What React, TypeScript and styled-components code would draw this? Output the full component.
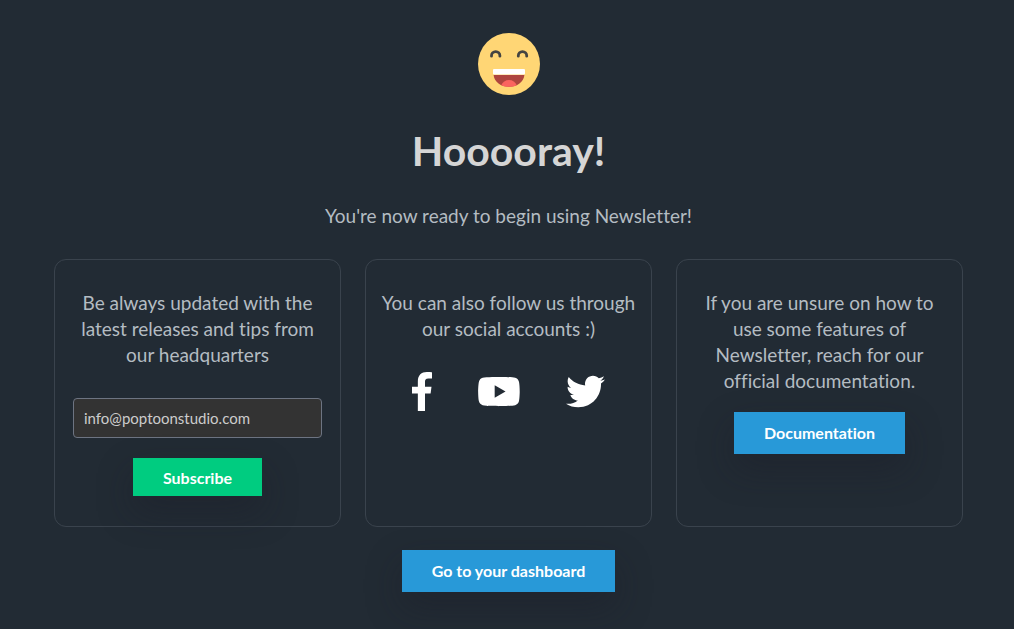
import React from "react";
import styled, { createGlobalStyle, css } from "styled-components";

const GlobalStyle = createGlobalStyle`
  *, *::before, *::after { box-sizing: border-box; }
  body {
    margin: 0;
    background: #222b34;
    color: #b4bcc2;
    font-family: Lato, "Open Sans", sans-serif;
    font-size: 19px;
    font-variant-ligatures: none;
    line-height: 26px;
  }
`;

const Page = styled.main`
  display: flex;
  flex-direction: column;
  align-items: center;
  padding: 33px 51px 37px 54px;
  text-align: center;
`;

const Title = styled.h1`
  margin: 32px 0 28px;
  color: #d5d5d5;
  font-size: 41px;
  font-weight: 700;
  line-height: 48px;
`;

const Text = styled.p`
  margin: 0;
`;

const Cards = styled.div`
  display: grid;
  grid-template-columns: repeat(3, minmax(0, 1fr));
  gap: 24px;
  width: 100%;
  margin: 30px 0 23px;
`;

const Card = styled.section`
  display: flex;
  flex-direction: column;
  align-items: center;
  padding: 30px 14px;
  border: 1px solid #3a434d;
  border-radius: 12px;
`;

const Form = styled.form`
  display: flex;
  flex-direction: column;
  align-items: center;
  gap: 20px;
  width: 100%;
  margin-top: 30px;
  padding: 0 4px;
`;

const EmailInput = styled.input`
  width: 100%;
  height: 40px;
  padding: 0 10px;
  border: 1px solid #6d7482;
  border-radius: 4px;
  background: #333;
  color: #ccc;
  font-family: inherit;
  font-size: 15px;
`;

const buttonLook = css`
  padding: 0 30px;
  border: 0;
  color: #fff;
  font-family: inherit;
  font-size: 16px;
  font-weight: 700;
  text-decoration: none;
  white-space: nowrap;
  cursor: pointer;
  box-shadow: 0 15px 35px rgba(27, 27, 38, 0.35);
`;

const SubscribeButton = styled.button`
  ${buttonLook}
  height: 38px;
  background: #00cc80;
`;

const LinkButton = styled.a<{ $gap?: number }>`
  ${buttonLook}
  margin-top: ${({ $gap = 0 }) => $gap}px;
  background: #2899d8;
  line-height: 42px;
`;

const SocialLinks = styled.nav`
  display: flex;
  gap: 45px;
  margin-top: 30px;
`;

const SocialLink = styled.a`
  display: flex;
  color: #fff;

  svg {
    height: 39px;
    fill: currentColor;
  }
`;

const socials = [
  {
    name: "Facebook",
    width: 264,
    path: "M76.7 512V283H0v-91h76.7v-71.7C76.7 42.4 124.3 0 193.8 0c33.3 0 61.9 2.5 70.2 3.6V85h-48.2c-37.8 0-45.1 18-45.1 44.3V192H256l-11.7 91h-73.6v229",
  },
  {
    name: "YouTube",
    width: 576,
    path: "M549.655 124.083c-6.281-23.65-24.787-42.276-48.284-48.597C458.781 64 288 64 288 64S117.22 64 74.629 75.486c-23.497 6.322-42.003 24.947-48.284 48.597-11.412 42.867-11.412 132.305-11.412 132.305s0 89.438 11.412 132.305c6.281 23.65 24.787 41.5 48.284 47.821C117.22 448 288 448 288 448s170.78 0 213.371-11.486c23.497-6.321 42.003-24.171 48.284-47.821 11.412-42.867 11.412-132.305 11.412-132.305s0-89.438-11.412-132.305zm-317.51 213.508V175.185l142.739 81.205-142.739 81.201z",
  },
  {
    name: "Twitter",
    width: 512,
    path: "M459.37 151.716c.325 4.548.325 9.097.325 13.645 0 138.72-105.583 298.558-298.558 298.558-59.452 0-114.68-17.219-161.137-47.106 8.447.974 16.568 1.299 25.34 1.299 49.055 0 94.213-16.568 130.274-44.832-46.132-.975-84.792-31.188-98.112-72.772 6.498.974 12.995 1.624 19.818 1.624 9.421 0 18.843-1.3 27.614-3.573-48.081-9.747-84.143-51.98-84.143-102.985v-1.299c13.969 7.797 30.214 12.67 47.431 13.319-28.264-18.843-46.781-51.005-46.781-87.391 0-19.492 5.197-37.36 14.294-52.954 51.655 63.675 129.3 105.258 216.365 109.807-1.624-7.797-2.599-15.918-2.599-24.04 0-57.828 46.782-104.934 104.934-104.934 30.213 0 57.502 12.67 76.67 33.137 23.715-4.548 46.456-13.32 66.599-25.34-7.798 24.366-24.366 44.833-46.132 57.827 21.117-2.273 41.584-8.122 60.426-16.243-14.292 20.791-32.161 39.308-52.628 54.253z",
  },
];

function LaughingFace() {
  return (
    <svg width="62" height="62" viewBox="0 0 62 62" aria-hidden="true">
      <circle cx="31" cy="31" r="31" fill="#ffd675" />
      <g fill="none" stroke="#444441" strokeWidth="2.8" strokeLinecap="round">
        <path d="M13.5 23.2v-.4a4.2 4.2 0 0 1 8.4 0v.4" />
        <path d="M40.3 23.2v-.4a4.2 4.2 0 0 1 8.4 0v.4" />
      </g>
      <rect x="15" y="36" width="32" height="5.5" rx="1" fill="#fff" />
      <path d="M15.6 42h30.8C45.8 49 39 53.8 31 53.8S16.2 49 15.6 42z" fill="#ae453e" />
      <path d="M23.3 52.2C24.6 49 27.5 47 31 47s6.4 2 7.7 5.2C36.5 53.2 33.8 53.8 31 53.8s-5.5-.6-7.7-1.6z" fill="#fa645f" />
    </svg>
  );
}

export default function App() {
  return (
    <>
      <GlobalStyle />
      <Page>
        <LaughingFace />
        <Title>Hooooray!</Title>
        <Text>You're now ready to begin using Newsletter!</Text>
        <Cards>
          <Card>
            <Text>Be always updated with the latest releases and tips from our headquarters</Text>
            <Form onSubmit={(event) => event.preventDefault()}>
              <EmailInput type="email" aria-label="Email address" defaultValue="info@poptoonstudio.com" />
              <SubscribeButton type="submit">Subscribe</SubscribeButton>
            </Form>
          </Card>
          <Card>
            <Text>You can also follow us through our social accounts :)</Text>
            <SocialLinks aria-label="Social accounts">
              {socials.map(({ name, width, path }) => (
                <SocialLink key={name} href="#" aria-label={name}>
                  <svg viewBox={`0 0 ${width} 512`} aria-hidden="true">
                    <path d={path} />
                  </svg>
                </SocialLink>
              ))}
            </SocialLinks>
          </Card>
          <Card>
            <Text>If you are unsure on how to use some features of Newsletter, reach for our official documentation.</Text>
            <LinkButton href="#" $gap={18}>Documentation</LinkButton>
          </Card>
        </Cards>
        <LinkButton href="#">Go to your dashboard</LinkButton>
      </Page>
    </>
  );
}
